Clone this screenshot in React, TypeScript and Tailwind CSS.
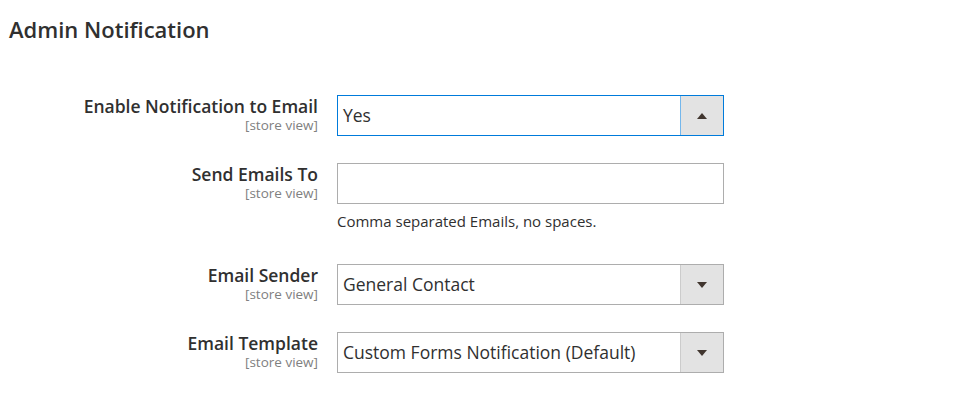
import React from 'react';

const Arrow = ({ up }: { up?: boolean }) => (
  <svg width="10" height="6" viewBox="0 0 10 6" className="text-[#41362f]">
    {up ? <path d="M0 6 L5 0 L10 6 Z" fill="currentColor" /> : <path d="M0 0 L10 0 L5 6 Z" fill="currentColor" />}
  </svg>
);

function Label({ title }: { title: string }) {
  return (
    <div className="w-[318px] shrink-0 text-right pt-[1px]">
      <div className="text-[17.5px] leading-[20px] font-semibold text-[#303030]">{title}</div>
      <div className="text-[13.5px] leading-[18px] text-[#808080]">[store view]</div>
    </div>
  );
}

function Select({ value, open }: { value: string; open?: boolean }) {
  return (
    <div
      className={
        open
          ? "ml-[19px] w-[387px] h-[41px] flex border border-[#007bdb] bg-white"
          : "ml-[19px] w-[387px] h-[41px] flex border border-[#adadad] bg-white"
      }
    >
      <div className="flex-1 flex items-center pl-[5px] text-[17.5px] text-[#303030]">{value}</div>
      <div
        className={
          open
            ? "w-[43px] flex items-center justify-center bg-[#e3e3e3] border-l border-[#74b7ec]"
            : "w-[43px] flex items-center justify-center bg-[#e3e3e3] border-l border-[#cccccc]"
        }
      >
        <Arrow up={open} />
      </div>
    </div>
  );
}

export default function App() {
  return (
    <div className="w-[957px] h-[396px] bg-white" style={{ fontFamily: '"Open Sans", "Liberation Sans", sans-serif' }}>
      <h2 className="pl-[9px] pt-[14px] text-[22px] leading-[30px] font-semibold text-[#303030]">Admin Notification</h2>

      <div className="mt-[51px] flex">
        <Label title="Enable Notification to Email" />
        <Select value="Yes" open />
      </div>

      <div className="mt-[27px] flex">
        <Label title="Send Emails To" />
        <div className="ml-[19px]">
          <div className="w-[387px] h-[41px] border border-[#adadad] bg-white" />
          <div className="mt-[7px] text-[15px] leading-[20px] text-[#303030]">Comma separated Emails, no spaces.</div>
        </div>
      </div>

      <div className="mt-[33px] flex">
        <Label title="Email Sender" />
        <Select value="General Contact" />
      </div>

      <div className="mt-[27px] flex">
        <Label title="Email Template" />
        <Select value="Custom Forms Notification (Default)" />
      </div>
    </div>
  );
}
